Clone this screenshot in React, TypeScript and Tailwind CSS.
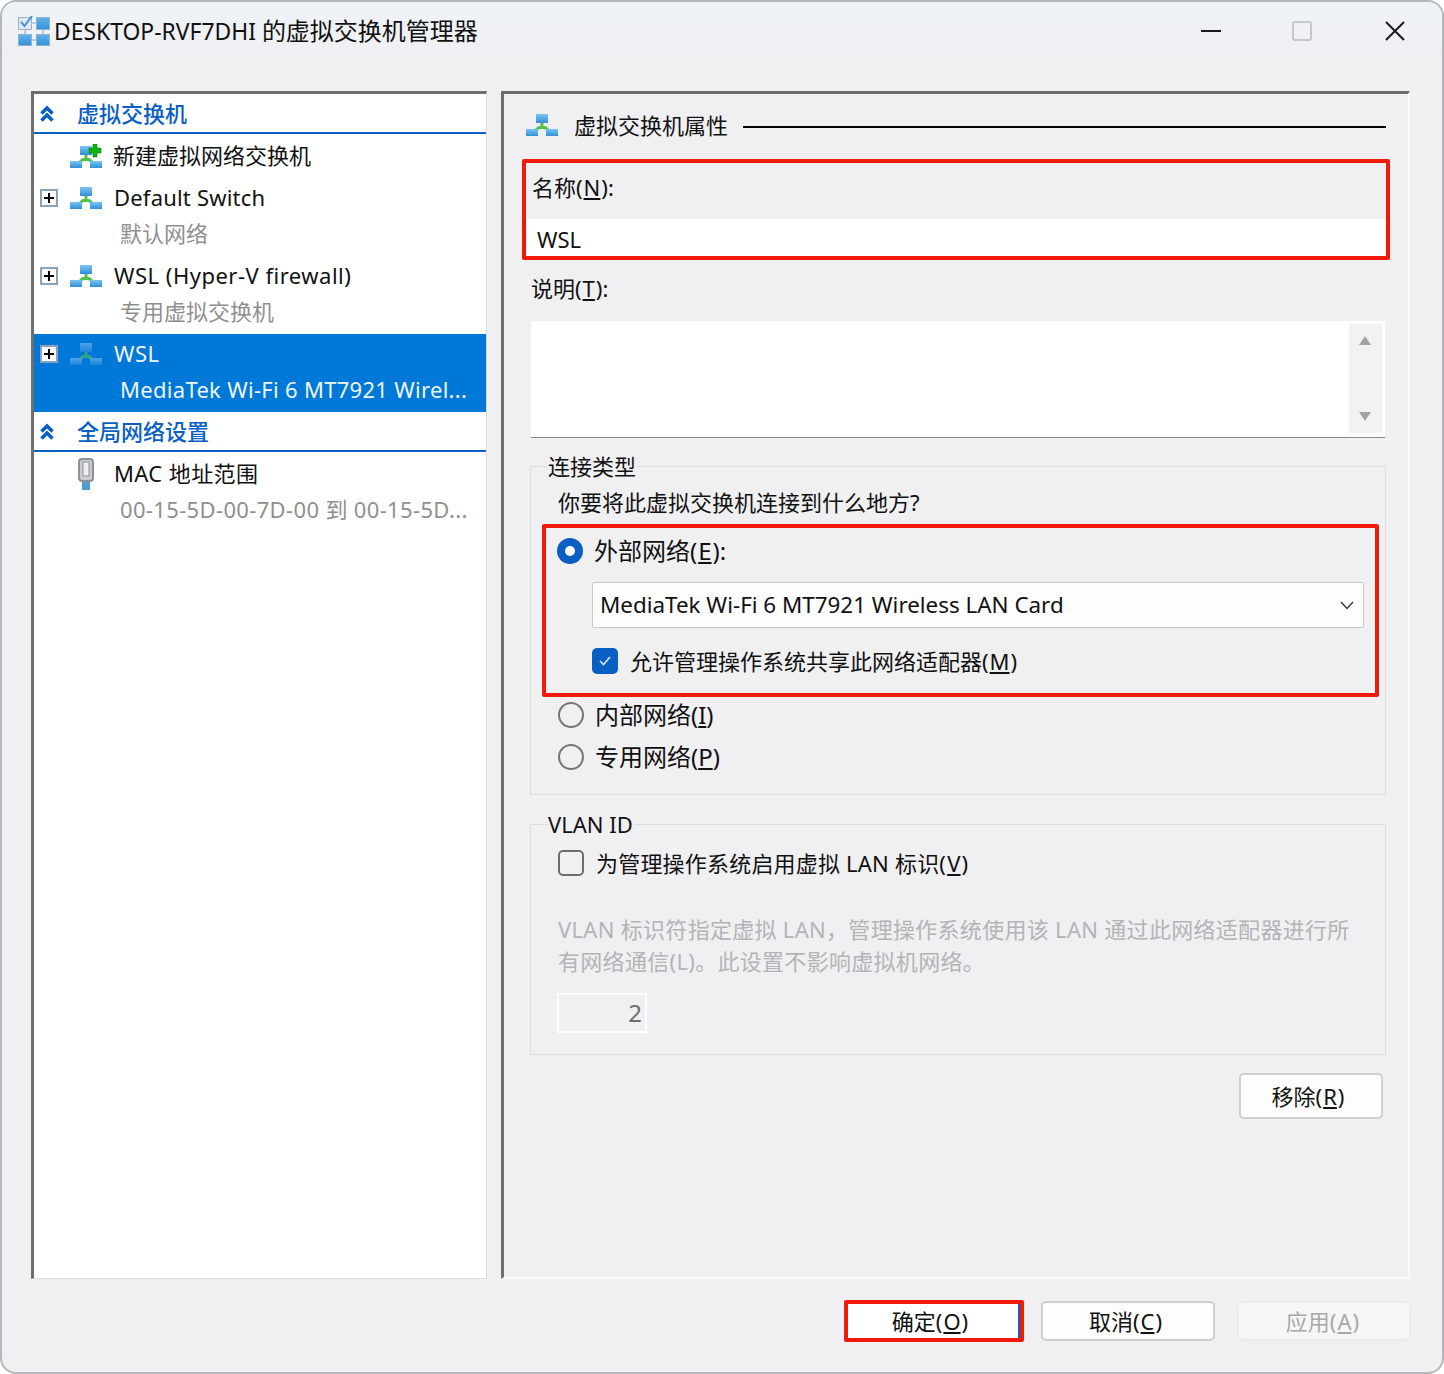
import React from "react";

// blue boxes joined by a green connector, the switch icon of the tree
const SwitchIcon = ({ plus = false, dim = false }: { plus?: boolean; dim?: boolean }) => (
  <svg width="32" height={plus ? 24 : 22} viewBox={plus ? "0 -2 32 24" : "0 0 32 22"} className={dim ? "opacity-60" : ""}>
    <defs>
      <linearGradient id="boxBlue" x1="0" y1="0" x2="0" y2="1">
        <stop offset="0" stopColor="#7cc4f2" />
        <stop offset="1" stopColor="#2f8fd8" />
      </linearGradient>
    </defs>
    <path d="M16 8v6M10 16l3-2.500h6l3 2.500" stroke="#55c04a" strokeWidth="3" fill="none" />
    <rect x="10" y="0" width="12" height="9" fill="url(#boxBlue)" />
    <rect x="0" y="15" width="12" height="7" fill="url(#boxBlue)" />
    <rect x="20" y="15" width="12" height="7" fill="url(#boxBlue)" />
    {plus && (
      <path d="M23-2h4v4h4v5h-4v4h-4V7h-4V2h4z" fill="#0cb40c" stroke="#0a7d12" strokeWidth="0.6" />
    )}
  </svg>
);

const AppIcon = () => (
  <svg width="32" height="30" viewBox="0 0 32 30">
    <defs>
      <linearGradient id="appBlue" x1="0" y1="0" x2="0" y2="1">
        <stop offset="0" stopColor="#62b4ec" />
        <stop offset="1" stopColor="#3490d6" />
      </linearGradient>
    </defs>
    <path d="M14 7h4M7 14v4M25 14v4M14 24h4" stroke="#b4cde2" strokeWidth="2" />
    <rect x="0.500" y="1.500" width="13" height="12" fill="#dfe7ef" stroke="#9fb2c4" />
    <path d="M3 6l3.500 4L14 0" stroke="#3d93d8" strokeWidth="2" fill="none" />
    <rect x="18.500" y="1.500" width="13" height="12" fill="url(#appBlue)" stroke="#8db4d2" />
    <rect x="0.500" y="18.500" width="13" height="11" fill="url(#appBlue)" stroke="#8db4d2" />
    <rect x="18.500" y="18.500" width="13" height="11" fill="url(#appBlue)" stroke="#8db4d2" />
  </svg>
);

const Chevrons = () => (
  <svg width="14" height="17" viewBox="0 0 14 17" fill="none" stroke="#0a5fc4" strokeWidth="3.600">
    <path d="M1.500 8.500L7 3 12.500 8.500M1.500 15.500L7 10 12.500 15.500" />
  </svg>
);

const Expander = () => (
  <span className="flex h-[18px] w-[18px] shrink-0 items-center justify-center border-2 border-[#8ba3b8] bg-white">
    <svg width="12" height="12" viewBox="0 0 12 12" stroke="#000" strokeWidth="2">
      <path d="M1 6h10M6 1v10" />
    </svg>
  </span>
);

const MacIcon = () => (
  <svg width="16" height="32" viewBox="0 0 16 32">
    <rect x="4" y="22" width="8" height="10" fill="#4d9fd0" />
    <rect x="1" y="1" width="14" height="22" rx="3" fill="#c9ccd0" stroke="#8d9196" strokeWidth="2" />
    <rect x="5" y="4" width="6" height="14" fill="#eef0f2" stroke="#8d9196" />
  </svg>
);

const Radio = ({ on = false }: { on?: boolean }) =>
  on ? (
    <span className="flex h-[26px] w-[26px] shrink-0 items-center justify-center rounded-full bg-[#0a5fc4]">
      <span className="h-[10px] w-[10px] rounded-full bg-white" />
    </span>
  ) : (
    <span className="h-[26px] w-[26px] shrink-0 rounded-full border-2 border-[#767676]" />
  );

// access key letter, underlined as in the dialog
const Key = ({ c }: { c: string }) => <u className="mx-[1px]">{c}</u>;

const TreeHeader = ({ label }: { label: string }) => (
  <div className="flex h-10 items-center border-b-2 border-[#0a5fc4]">
    <span className="ml-[6px] w-[37px] shrink-0">
      <Chevrons />
    </span>
    <span className="font-medium text-[#0a5fc4]">{label}</span>
  </div>
);

const TreeNode = ({
  name,
  sub,
  nameTrack,
  subTrack,
  selected = false,
}: {
  name: string;
  sub: string;
  nameTrack: string;
  subTrack: string;
  selected?: boolean;
}) => (
  <div className={`h-[78px] ${selected ? "bg-[#0078d7] text-[#eef6fd]" : ""}`}>
    <div className="flex h-10 items-center">
      <span className="ml-[6px] w-[30px] shrink-0">
        <Expander />
      </span>
      <SwitchIcon dim={selected} />
      <span className={`ml-3 pb-[2px] whitespace-nowrap ${nameTrack}`}>{name}</span>
    </div>
    <div className={`ml-[86px] flex h-8 items-center pb-[2px] whitespace-nowrap ${subTrack} ${selected ? "" : "text-[#8f8f8f]"}`}>{sub}</div>
  </div>
);

const Button = ({ children, className }: { children: React.ReactNode; className: string }) => (
  <div className={`flex items-center justify-center rounded-[5px] border-2 ${className}`}>{children}</div>
);

export default function App() {
  return (
    <div className="h-[1374px] w-[1444px] overflow-hidden bg-white font-['Noto_Sans','Noto_Sans_CJK_SC',sans-serif] text-[22px] text-[#111]">
      <div className="h-full rounded-[16px] border-2 border-[#b4b8ba] bg-[#f0eff2]">
        {/* ---------- TITLE BAR ---------- */}
        <div className="flex h-[58px] items-center rounded-t-[14px] bg-gradient-to-b from-[#eef3f7] to-[#f0eff2] pl-4">
          <AppIcon />
          <span className="ml-[4px] text-2xl whitespace-nowrap">
            <span className="text-[22.9px]">DESKTOP-RVF7DHI </span>的虚拟交换机管理器
          </span>
          <div className="ml-auto flex items-center pr-[37px]">
            <span className="h-[2px] w-5 bg-[#1a1a1a]" />
            <span className="ml-[71px] h-5 w-5 rounded-[3px] border-2 border-[#c4c8cb]" />
            <svg className="ml-[73px]" width="20" height="20" viewBox="0 0 20 20" stroke="#1a1a1a" strokeWidth="2">
              <path d="M1 1l18 18M19 1L1 19" />
            </svg>
          </div>
        </div>

        <div className="mt-[31px] ml-[29px] flex h-[1188px] gap-[14px]">
          {/* ---------- LEFT TREE ---------- */}
          <div className="w-[456px] shrink-0 border-t-[3px] border-r-[1px] border-b-[1px] border-l-[3px] border-t-[#6e6e6e] border-r-[#dcdcdf] border-b-[#dcdcdf] border-l-[#6e6e6e] bg-white">
            <TreeHeader label="虚拟交换机" />
            <div className="flex h-[44px] items-center pl-[36px]">
              <SwitchIcon plus />
              <span className="ml-[11px] pb-[2px]">新建虚拟网络交换机</span>
            </div>
            <TreeNode name="Default Switch" sub="默认网络" nameTrack="tracking-[0.2px]" subTrack="" />
            <TreeNode name="WSL (Hyper-V firewall)" sub="专用虚拟交换机" nameTrack="tracking-[0.5px]" subTrack="" />
            <TreeNode name="WSL" sub="MediaTek Wi-Fi 6 MT7921 Wirel..." nameTrack="tracking-[0.5px]" subTrack="tracking-[0.3px]" selected />
            <TreeHeader label="全局网络设置" />
            <div className="mt-[2px] flex h-10 items-center pl-[44px]">
              <MacIcon />
              <span className="ml-5 pb-[2px] tracking-[0.4px]">MAC 地址范围</span>
            </div>
            <div className="ml-[86px] flex h-8 items-center pb-[2px] tracking-[0.35px] whitespace-nowrap text-[#8f8f8f]">00-15-5D-00-7D-00 到 00-15-5D...</div>
          </div>

          {/* ---------- RIGHT PANE ---------- */}
          <div className="w-[909px] shrink-0 border-t-[3px] border-r-2 border-b-2 border-l-[3px] border-t-[#6e6e6e] border-r-[#fafafa] border-b-[#fafafa] border-l-[#6e6e6e] pt-5">
            <div className="flex h-[22px] items-center pl-[22px]">
              <SwitchIcon />
              <span className="ml-4">虚拟交换机属性</span>
              <span className="mt-[3px] mr-[22px] ml-[15px] h-[2px] flex-1 bg-black" />
            </div>

            <div className="mt-[23px] ml-[18px] w-[868px] rounded-[2px] border-4 border-[#f01a0a]">
              <div className="flex h-[56px] items-center pb-2 pl-[6px]">
                <span>
                  名称(<Key c="N" />):
                </span>
              </div>
              <div className="ml-[1px] flex h-[37px] items-center bg-white pt-[3px] pl-[10px]">WSL</div>
            </div>

            <div className="mt-[12px] flex h-8 items-center pl-[27px]">
              <span>
                说明(<Key c="T" />):
              </span>
            </div>

            {/* description box */}
            <div className="mt-[17px] ml-[27px] flex h-[116px] w-[854px] justify-end border-[3px] border-b-0 border-white bg-white">
              <div className="flex h-[109px] w-[33px] flex-col items-center justify-between bg-[#f2f2f3] py-3 pr-[2px]">
                <svg width="12" height="9" viewBox="0 0 12 9" fill="#a3a3a3">
                  <path d="M6 0l6 9H0z" />
                </svg>
                <svg width="12" height="9" viewBox="0 0 12 9" fill="#a3a3a3">
                  <path d="M0 0h12L6 9z" />
                </svg>
              </div>
            </div>
            <div className="ml-[27px] h-[1px] w-[854px] bg-[#8a8a8a]" />

            {/* connection type */}
            <fieldset className="mt-[16px] ml-[26px] h-[341px] w-[856px] border border-[#dcdcdf] pr-0 pl-[11px]">
              <legend className="ml-[6px] h-[24px] pr-[1px] leading-[24px]">连接类型</legend>
              <div className="mt-[4px] flex h-10 items-center pl-4">你要将此虚拟交换机连接到什么地方?</div>
              <div className="mt-[2px] h-[173px] w-[837px] rounded-[2px] border-4 border-[#f01a0a] bg-[#f0f0f1]">
                <div className="flex h-[54px] items-center pb-2 pl-[11px]">
                  <Radio on />
                  <span className="ml-[11px] text-2xl">
                    外部网络(<Key c="E" />):
                  </span>
                </div>
                <div className="ml-[46px] flex h-[46px] w-[772px] items-center justify-between rounded-[2px] border border-[#c8c8c8] bg-[#fdfdfd] pr-[9px] pl-[7px] text-[22.4px]">
                  <span>MediaTek Wi-Fi 6 MT7921 Wireless LAN Card</span>
                  <svg width="14" height="9" viewBox="0 0 14 9" fill="none" stroke="#333" strokeWidth="1.400">
                    <path d="M1 1l6 6.500L13 1" />
                  </svg>
                </div>
                <div className="mt-5 ml-[46px] flex h-[26px] items-center">
                  <span className="flex h-[26px] w-[26px] items-center justify-center rounded-[5px] bg-[#0a5fc4]">
                    <svg width="14" height="12" viewBox="0 0 14 12" fill="none" stroke="#d5e6f8" strokeWidth="1.600">
                      <path d="M2 6l3.500 3.500L12 2" />
                    </svg>
                  </span>
                  <span className="ml-3 whitespace-nowrap">
                    允许管理操作系统共享此网络适配器(<Key c="M" />)
                  </span>
                </div>
              </div>
              <div className="mt-[-3px] flex h-[42px] items-center pl-[16px]">
                <Radio />
                <span className="ml-[11px] text-2xl">
                  内部网络(<u>I</u>)
                </span>
              </div>
              <div className="flex h-[42px] items-center pl-[16px]">
                <Radio />
                <span className="ml-[11px] text-2xl">
                  专用网络(<u>P</u>)
                </span>
              </div>
            </fieldset>

            {/* vlan */}
            <fieldset className="mt-[17px] ml-[26px] h-[243px] w-[856px] border border-[#dcdcdf] pr-0 pl-[11px]">
              <legend className="ml-[6px] h-[24px] pr-[1px] leading-[24px]">VLAN ID</legend>
              <div className="mt-[14px] flex h-[26px] items-center pl-4">
                <span className="h-[26px] w-[26px] rounded-[5px] border-2 border-[#6e6e6e]" />
                <span className="ml-3 tracking-[0.2px]">
                  为管理操作系统启用虚拟 LAN 标识(<Key c="V" />)
                </span>
              </div>
              <div className="mt-[37px] w-[820px] pl-4 leading-8 tracking-[0.3px] text-[#b4b4b6]">
                VLAN 标识符指定虚拟 LAN，管理操作系统使用该 LAN 通过此网络适配器进行所有网络通信(L)。此设置不影响虚拟机网络。
              </div>
              <div className="mt-4 ml-[15px] flex h-10 w-[90px] items-center justify-end border-2 border-white pr-[3px] text-2xl text-[#6e6e6e]">2</div>
            </fieldset>

            <div className="mt-[18px] flex justify-end pr-[25px]">
              <Button className="h-[46px] w-[144px] border-[#cfcfd1] bg-[#fdfdfd] pr-[6px]">
                <span>
                  移除(<Key c="R" />)
                </span>
              </Button>
            </div>
          </div>
        </div>

        {/* ---------- FOOTER BUTTONS ---------- */}
        <div className="mt-[21px] flex items-center justify-end pr-[31px]">
          <div className="h-[42px] w-[180px] rounded-[2px] border-4 border-[#f01a0a] bg-white">
            <div className="flex h-full items-center justify-center border-r-2 border-[#0a5fc4] pr-[6px]">
              <span>
                确定(<Key c="O" />)
              </span>
            </div>
          </div>
          <Button className="ml-[17px] h-10 w-[174px] border-[#cfcfd1] bg-[#fdfdfd] pr-[5px]">
            <span>
              取消(<Key c="C" />)
            </span>
          </Button>
          <Button className="ml-[22px] h-10 w-[174px] border-[#ececee] bg-[#f6f6f7] pr-[3px] text-[#a8a8a8]">
            <span>
              应用(<Key c="A" />)
            </span>
          </Button>
        </div>
      </div>
    </div>
  );
}
